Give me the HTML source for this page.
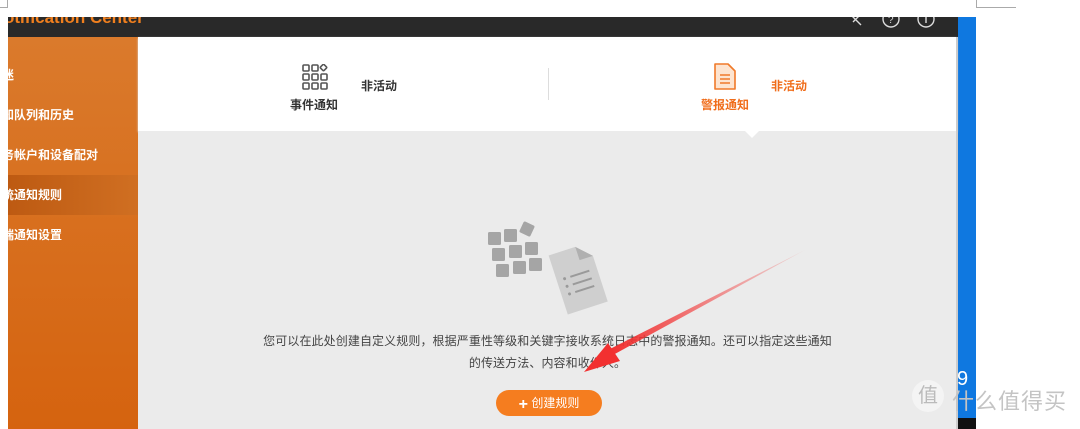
<!DOCTYPE html>
<html><head><meta charset="utf-8"><style>
*{margin:0;padding:0;box-sizing:border-box}
body{width:1080px;height:429px;background:#fff;position:relative;overflow:hidden;font-family:"Liberation Sans","Noto Sans CJK SC",sans-serif}
.a{position:absolute}
.side div{position:absolute;left:0;color:#fff;font-size:12px;width:130px;height:40px;line-height:40px;font-weight:bold}
</style></head><body>
<div class="a" style="left:0;top:0;width:8px;height:8px;border-right:1px solid #aaa;border-bottom:1px solid #aaa"></div>
<div class="a" style="left:976px;top:0;width:40px;height:8px;border-left:1px solid #aaa;border-bottom:1px solid #aaa"></div>
<div class="a" style="left:8px;top:17px;width:950px;height:20px;background:#292929;overflow:hidden">
<div class="a" style="left:-4px;top:-9px;color:#f07f1e;font-size:17px;font-weight:bold">otification Center</div>
<svg class="a" style="left:840px;top:0" width="110" height="20"><g stroke="#ddd" stroke-width="1.4" fill="none"><path d="M3 -2l10 10M11 -1l-6 6"/><circle cx="43" cy="2" r="8"/><circle cx="78" cy="2" r="8"/><path d="M78 -2v8"/></g><text x="40" y="6" fill="#ddd" font-size="10">?</text></svg>
</div>
<div class="a" style="left:958px;top:17px;width:18px;height:412px;background:#0f78e0"></div>
<div class="a" style="left:958px;top:418px;width:18px;height:11px;background:#111"></div>
<div class="a" style="left:957px;top:368px;color:#fff;font-size:20px">9</div>
<div class="a side" style="left:8px;top:37px;width:130px;height:392px;background:linear-gradient(#da7a2c,#d5630f)">
<div style="top:18px;left:-6px">迷</div>
<div style="top:58px;left:-6px">知队列和历史</div>
<div style="top:98px;left:-6px">务帐户和设备配对</div>
<div style="top:138px;left:0;background:linear-gradient(90deg,#bd5a12,#d06f22);width:130px"><span style="margin-left:-6px">统通知规则</span></div>
<div style="top:178px;left:-6px">端通知设置</div>
</div>
<div class="a" style="left:138px;top:37px;width:819px;height:94px;background:#fff;box-shadow:0 1px 2px #ddd"></div>
<div class="a" style="left:138px;top:131px;width:819px;height:298px;background:#ebebeb"></div>
<div class="a" style="left:956px;top:37px;width:2px;height:392px;background:#ccc"></div>
<svg class="a" style="left:302px;top:64px" width="28" height="28"><g fill="none" stroke="#555" stroke-width="1.6"><rect x="1" y="1" width="6" height="6" rx="1"/><rect x="10" y="1" width="6" height="6" rx="1"/><rect x="19" y="1" width="5" height="5" rx="1" transform="rotate(45 21.5 3.5)"/><rect x="1" y="10" width="6" height="6" rx="1"/><rect x="10" y="10" width="6" height="6" rx="1"/><rect x="19" y="10" width="6" height="6" rx="1"/><rect x="1" y="19" width="6" height="6" rx="1"/><rect x="10" y="19" width="6" height="6" rx="1"/><rect x="19" y="19" width="6" height="6" rx="1"/></g></svg>
<div class="a" style="left:290px;top:96px;font-size:12px;color:#333;font-weight:bold">事件通知</div>
<div class="a" style="left:361px;top:77px;font-size:12px;color:#333;font-weight:bold">非活动</div>
<div class="a" style="left:548px;top:68px;width:1px;height:32px;background:#ddd"></div>
<svg class="a" style="left:713px;top:62px" width="24" height="30"><path d="M2 2h13l7 7v18H2z" fill="#fde4d0" stroke="#f07a2a" stroke-width="1.6" stroke-linejoin="round"/><g stroke="#f07a2a" stroke-width="1.4"><path d="M7 13h10M7 17h10M7 21h10"/></g></svg>
<div class="a" style="left:701px;top:96px;font-size:12px;color:#f06d1b;font-weight:bold">警报通知</div>
<div class="a" style="left:771px;top:77px;font-size:12px;color:#f06d1b;font-weight:bold">非活动</div>
<div class="a" style="left:744px;top:130px;width:0;height:0;border-left:8px solid transparent;border-right:8px solid transparent;border-top:8px solid #fff"></div>
<svg class="a" style="left:486px;top:220px" width="130" height="100"><g fill="#a5a5a5"><rect x="2" y="12" width="13" height="13" rx="1.5"/><rect x="18" y="9" width="13" height="13" rx="1.5"/><rect x="35" y="3" width="12" height="12" rx="1.5" transform="rotate(25 41 9)"/><rect x="6" y="28" width="13" height="13" rx="1.5"/><rect x="23" y="25" width="13" height="13" rx="1.5"/><rect x="39" y="22" width="13" height="13" rx="1.5"/><rect x="10" y="44" width="13" height="13" rx="1.5"/><rect x="27" y="41" width="13" height="13" rx="1.5"/><rect x="43" y="38" width="13" height="13" rx="1.5"/></g>
<g transform="rotate(-18 90 55)"><path d="M70 28h28l14 14v48H70z" fill="#cfcfcf"/><path d="M98 28v14h14z" fill="#b0b0b0"/><g stroke="#9a9a9a" stroke-width="2"><path d="M84 55h20M84 63h20M84 71h20"/></g><g fill="#9a9a9a"><circle cx="78" cy="55" r="1.5"/><circle cx="78" cy="63" r="1.5"/><circle cx="78" cy="71" r="1.5"/></g></g></svg>
<div class="a" style="left:138px;top:330px;width:819px;text-align:center;font-size:12px;color:#444;line-height:22px;letter-spacing:0.1px">您可以在此处创建自定义规则，根据严重性等级和关键字接收系统日志中的警报通知。还可以指定这些通知<br>的传送方法、内容和收件人。</div>
<svg class="a" style="left:580px;top:245px" width="230" height="135"><defs><linearGradient id="g" x1="0" x2="1"><stop offset="0" stop-color="#f23030"/><stop offset="1" stop-color="#f23030" stop-opacity=".1"/></linearGradient></defs><path d="M30 104L225 5 L33 110z" fill="url(#g)"/><path d="M4 127L28 98L40 116z" fill="#f23030"/></svg>
<div class="a" style="left:496px;top:390px;width:106px;height:26px;border-radius:13px;background:#f57d1f;color:#fff;font-size:12px;text-align:center;line-height:26px"><b style="font-size:16px;vertical-align:-2px">+</b> 创建规则</div>
<div class="a" style="left:912px;top:380px;width:32px;height:32px;border-radius:50%;background:#f4f4f4;color:#bbb;font-size:20px;text-align:center;line-height:32px">值</div>
<div class="a" style="left:952px;top:384px;color:#c4c4c4;font-size:22px;letter-spacing:1px">什么值得买</div>
</body></html>
